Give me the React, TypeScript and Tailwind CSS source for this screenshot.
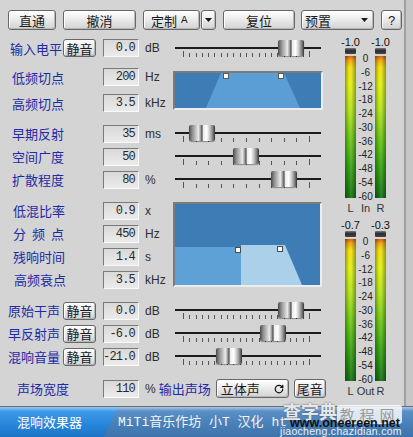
import React from 'react';
import { RotateCw } from 'lucide-react';

const BTN_BASE =
  'flex items-center rounded-[3px] border border-[#676767] bg-[linear-gradient(180deg,#ffffff,#eeeeee_40%,#d2d2d2)] shadow-[inset_1px_1px_0_#ffffff,inset_-1px_-1px_0_#b8b8b8] text-[13px] leading-none text-[#1a1a1a]';
const BTN = `${BTN_BASE} justify-center`;
const BLUE = 'text-[13px] leading-none text-[#1c2aa6]';
const FIELD =
  "flex h-[18px] w-[36px] shrink-0 items-center justify-end overflow-hidden border border-t-[#7a7a7a] border-l-[#7a7a7a] border-b-[#fafafa] border-r-[#fafafa] bg-[linear-gradient(180deg,#d9d9d9,#ebebeb)] pr-[3px] font-['Liberation_Mono',monospace] text-[12px] leading-none tracking-[-0.8px] text-[#2a2a2a]";
const UNIT = "w-[34px] shrink-0 pl-[6px] font-['Liberation_Sans',sans-serif] text-[12px] leading-none text-[#2e2e2e]";

const SCALE = ['0', '-6', '-12', '-18', '-24', '-30', '-36', '-42', '-48', '-54', '-60'];

function Arrow() {
  return (
    <svg width="7" height="4" viewBox="0 0 7 4" className="block">
      <polygon points="0,0 7,0 3.5,4" fill="#1a1a1a" />
    </svg>
  );
}

function Slider({ pos, dense = false }: { pos: number; dense?: boolean }) {
  const count = dense ? 21 : 11;
  return (
    <div className="relative h-[23px] w-[146px] shrink-0">
      <div className="mt-[10px] h-[2px] w-full bg-[#1c1c1c]" />
      <div className="ml-[8px] mt-[2px] flex h-[6px] w-[127px] items-end justify-between">
        {Array.from({ length: count }).map((_, i) => (
          <div
            key={i}
            className={`w-px bg-[#555555] ${i === 0 || i === count - 1 ? 'h-[6px]' : 'h-[4px]'}`}
          />
        ))}
      </div>
      <div
        className="absolute top-[3px] h-[16px] w-[26px] rounded-[2px] bg-[linear-gradient(90deg,#4a4a4a,#8c8c8c_12%,#c2c2c2_26%,#eaeaea_36%,#9a9a9a_45%,#4f4f4f_50%,#ececec_55%,#ffffff_68%,#c6c6c6_80%,#7a7a7a_92%,#333333)] shadow-[0_1px_1px_rgba(0,0,0,0.35)]"
        style={{ left: pos }}
      />
    </div>
  );
}

function Mute() {
  return <div className={`${BTN} h-[18px] w-[33px] shrink-0`}>静音</div>;
}

function Row({
  label,
  value,
  unit,
  pad = 'pl-[12px]',
  h = 'h-[23px]',
  children,
}: {
  label: React.ReactNode;
  value: string;
  unit: string;
  pad?: string;
  h?: string;
  children?: React.ReactNode;
}) {
  return (
    <div className={`flex ${h} items-center`}>
      <div className={`w-[103px] shrink-0 ${pad} ${BLUE}`}>{label}</div>
      <div className={FIELD}>{value}</div>
      <div className={UNIT}>{unit}</div>
      {children}
    </div>
  );
}

function MuteRow({ label, value, slider }: { label: string; value: string; slider: number }) {
  return (
    <div className="flex h-[23px] items-center">
      <div className="flex w-[103px] shrink-0 items-center">
        <span className={`w-[63px] pr-[3px] text-right ${BLUE}`}>{label}</span>
        <Mute />
      </div>
      <div className={FIELD}>{value}</div>
      <div className={`${UNIT} w-[36px]`}>dB</div>
      <Slider pos={slider} dense />
    </div>
  );
}

function MeterBar() {
  return (
    <div className="flex h-full w-[11px] shrink-0 flex-col">
      <div className="h-[6px] shrink-0 rounded-[1px] bg-[linear-gradient(180deg,#7a7a7a,#2b2b2b_45%,#454545)]" />
      <div className="mt-[2px] flex-1 bg-[linear-gradient(90deg,rgba(0,40,0,0.4),rgba(0,0,0,0)_35%,rgba(255,255,255,0.12)_55%,rgba(0,40,0,0.4)),linear-gradient(180deg,#d5500c,#f2a20a_3%,#f3dd0a_8%,#e2ee12_20%,#b4e21a_38%,#6cc414_58%,#34a010_78%,#126c10)]" />
    </div>
  );
}

function Meter({ left, right, mid }: { left: string; right: string; mid: string }) {
  return (
    <div className="flex flex-col font-['Liberation_Sans',sans-serif] text-[#111]">
      <div className="flex h-[12px] text-[11px] leading-[12px]">
        <div className="flex w-[11px] justify-center whitespace-nowrap">{left}</div>
        <div className="w-[19px]" />
        <div className="flex w-[11px] justify-center whitespace-nowrap">{right}</div>
      </div>
      <div className="flex h-[150px]">
        <MeterBar />
        <div className="flex w-[19px] shrink-0 flex-col pt-[4px] text-[10px] text-[#222]">
          {SCALE.map((s) => (
            <div key={s} className="h-[13.75px] shrink-0 text-center leading-[13.75px]">
              {s}
            </div>
          ))}
        </div>
        <MeterBar />
      </div>
      <div className="mt-[4px] flex h-[12px] text-[11px] leading-[12px] text-[#333]">
        <div className="flex w-[11px] justify-center">L</div>
        <div className="flex w-[19px] justify-center">{mid}</div>
        <div className="flex w-[11px] justify-center">R</div>
      </div>
    </div>
  );
}

function GraphCut() {
  return (
    <div className="mt-[11px] h-[39px] w-[150px] shrink-0 border-2 border-t-[#7b7b7b] border-l-[#7b7b7b] border-b-[#ededed] border-r-[#ededed]">
      <svg width="146" height="35" className="block">
        <rect width="146" height="35" fill="#3e7cb5" />
        <polygon points="31,35 46,0 109,0 125,35" fill="#5b9ed5" />
        <rect x="48.5" y="0.5" width="5" height="5" fill="#ffffff" stroke="#5a5a5a" />
        <rect x="103.5" y="0.5" width="5" height="5" fill="#ffffff" stroke="#5a5a5a" />
      </svg>
    </div>
  );
}

function GraphVerb() {
  return (
    <div className="mt-[11px] h-[85px] w-[149px] shrink-0 border-2 border-t-[#7b7b7b] border-l-[#7b7b7b] border-b-[#ededed] border-r-[#ededed]">
      <svg width="145" height="81" className="block">
        <rect width="145" height="81" fill="#3e7cb5" />
        <rect x="0" y="43" width="66" height="38" fill="#5ea1d6" />
        <polygon points="66,41 110,41 127,81 66,81" fill="#abd0ea" />
        <rect x="60.5" y="43.5" width="5" height="5" fill="#ffffff" stroke="#4a4a4a" />
        <rect x="102.5" y="42.5" width="5" height="5" fill="#ffffff" stroke="#4a4a4a" />
      </svg>
    </div>
  );
}

export default function App() {
  return (
    <div className="relative flex h-[437px] w-[413px] flex-col overflow-hidden bg-[#d4d4d4] font-['Noto_Sans_CJK_SC','Liberation_Sans',sans-serif]">
      <div className="flex h-[406px]">
        <div className="flex w-[404px] flex-col">
          {/* toolbar */}
          <div className="flex h-[36px] items-start pl-[8px] pt-[10px]">
            <div className={`${BTN} h-[20px] w-[48px]`}>直通</div>
            <div className={`${BTN} ml-[7px] h-[20px] w-[73px]`}>撤消</div>
            <div className="ml-[7px] flex h-[20px]">
              <div className={`${BTN_BASE} w-[57px] justify-start pl-[7px]`}>
                定制
                <span className="ml-[4px] font-['Liberation_Mono',monospace] text-[11px]">A</span>
              </div>
              <div className={`${BTN} ml-px w-[15px]`}>
                <Arrow />
              </div>
            </div>
            <div className={`${BTN} ml-[7px] h-[20px] w-[72px]`}>复位</div>
            <div className={`${BTN_BASE} ml-[6px] h-[20px] w-[73px] justify-between pl-[3px] pr-[5px]`}>
              预置
              <Arrow />
            </div>
            <div className={`${BTN} ml-[7px] h-[20px] w-[21px] font-['Liberation_Sans',sans-serif] text-[12px]`}>?</div>
          </div>

          <div className="flex flex-1">
            {/* controls */}
            <div className="flex w-[330px] shrink-0 flex-col">
              <div className="flex h-[24px] items-center">
                <div className="flex w-[103px] shrink-0 items-center">
                  <span className={`w-[63px] pl-[10px] ${BLUE}`}>输入电平</span>
                  <Mute />
                </div>
                <div className={FIELD}>0.0</div>
                <div className={`${UNIT} w-[36px]`}>dB</div>
                <Slider pos={103} dense />
              </div>

              <div className="flex h-[62px]">
                <div className="flex w-[173px] shrink-0 flex-col gap-[2px] pt-[5px]">
                  <Row label="低频切点" value="200" unit="Hz" h="h-[24px]" />
                  <Row label="高频切点" value="3.5" unit="kHz" h="h-[24px]" />
                </div>
                <GraphCut />
              </div>

              <Row label="早期反射" value="35" unit="ms">
                <div className="w-[2px]" />
                <Slider pos={14} />
              </Row>
              <Row label="空间广度" value="50" unit="">
                <div className="w-[2px]" />
                <Slider pos={58} />
              </Row>
              <Row label="扩散程度" value="80" unit="%">
                <div className="w-[2px]" />
                <Slider pos={96} />
              </Row>

              <div className="flex h-[108px]">
                <div className="flex w-[173px] shrink-0 flex-col pt-[8px]">
                  <Row label="低混比率" value="0.9" unit="x" pad="pl-[13px]" />
                  <Row
                    label={
                      <span className="flex w-[51px] justify-between">
                        <span>分</span>
                        <span>频</span>
                        <span>点</span>
                      </span>
                    }
                    value="450"
                    unit="Hz"
                    pad="pl-[13px]"
                  />
                  <Row label="残响时间" value="1.4" unit="s" pad="pl-[13px]" />
                  <Row label="高频衰点" value="3.5" unit="kHz" pad="pl-[14px]" />
                </div>
                <GraphVerb />
              </div>

              <MuteRow label="原始干声" value="0.0" slider={103} />
              <MuteRow label="早反射声" value="-6.0" slider={85} />
              <MuteRow label="混响音量" value="-21.0" slider={41} />

              <div className="mt-[9px] flex h-[23px] items-center">
                <div className={`w-[103px] shrink-0 pl-[17px] ${BLUE}`}>声场宽度</div>
                <div className={FIELD}>110</div>
                <div className="w-[6px]" />
                <span className="font-['Liberation_Sans',sans-serif] text-[12px] text-[#2e2e2e]">%</span>
                <span className={`ml-[3px] ${BLUE}`}>输出声场</span>
                <div className={`${BTN_BASE} ml-[5px] h-[19px] w-[73px] justify-between pl-[4px] pr-[4px]`}>
                  立体声
                  <RotateCw size={10} strokeWidth={3} className="text-[#111]" />
                </div>
                <div className={`${BTN} ml-[5px] h-[19px] w-[32px]`}>尾音</div>
              </div>
            </div>

            {/* meters */}
            <div className="flex flex-col pl-[15px]">
              <Meter left="-1.0" right="-1.0" mid="In" />
              <div className="h-[5px]" />
              <Meter left="-0.7" right="-0.3" mid="Out" />
            </div>
          </div>
        </div>
        <div className="w-[9px] border-l-2 border-[#a0a0a0] bg-[#c7c7c7]" />
      </div>

      {/* status bar */}
      <div className="flex h-[31px] border-t border-[#6e6e6e] bg-[linear-gradient(180deg,#a8c7e7,#5b8fc6_14%,#4a80b8_55%,#3e74ac)]">
        <div className="flex w-[118px] items-center bg-[linear-gradient(180deg,#8fcaf7,#3c97e7_16%,#2686da_60%,#1d73c5)] pl-[17px] text-[13px] text-white [clip-path:polygon(0_0,100%_0,88%_100%,0_100%)]">
          混响效果器
        </div>
        <div className="flex items-center whitespace-nowrap pt-[2px] font-['Liberation_Mono','Noto_Sans_CJK_SC',monospace] text-[13px] text-[#f4f4f4]">
          MiTi音乐作坊 小T 汉化 ht
        </div>
      </div>

      {/* watermark */}
      <div className="absolute left-[283px] top-[402px] text-[18px] font-bold leading-none text-white/85 [text-shadow:0_0_2px_#555]">
        查字典
      </div>
      <div className="absolute left-[337px] top-[405px] flex h-[19px] w-[65px] items-center justify-center rounded-[3px] bg-white/80 text-[15px] leading-none tracking-[5px] text-[#9a9a9a]">
        教程网
      </div>
      <div className="absolute left-[290px] top-[417px] font-['Liberation_Sans',sans-serif] text-[12.5px] font-bold leading-none text-[#111]">
        www.oneereen.net
      </div>
      <div className="absolute left-[280px] top-[426px] font-['Liberation_Sans',sans-serif] text-[10.5px] leading-none tracking-[0.3px] text-white/90">
        jiaocheng.chazidian.com
      </div>
    </div>
  );
}
